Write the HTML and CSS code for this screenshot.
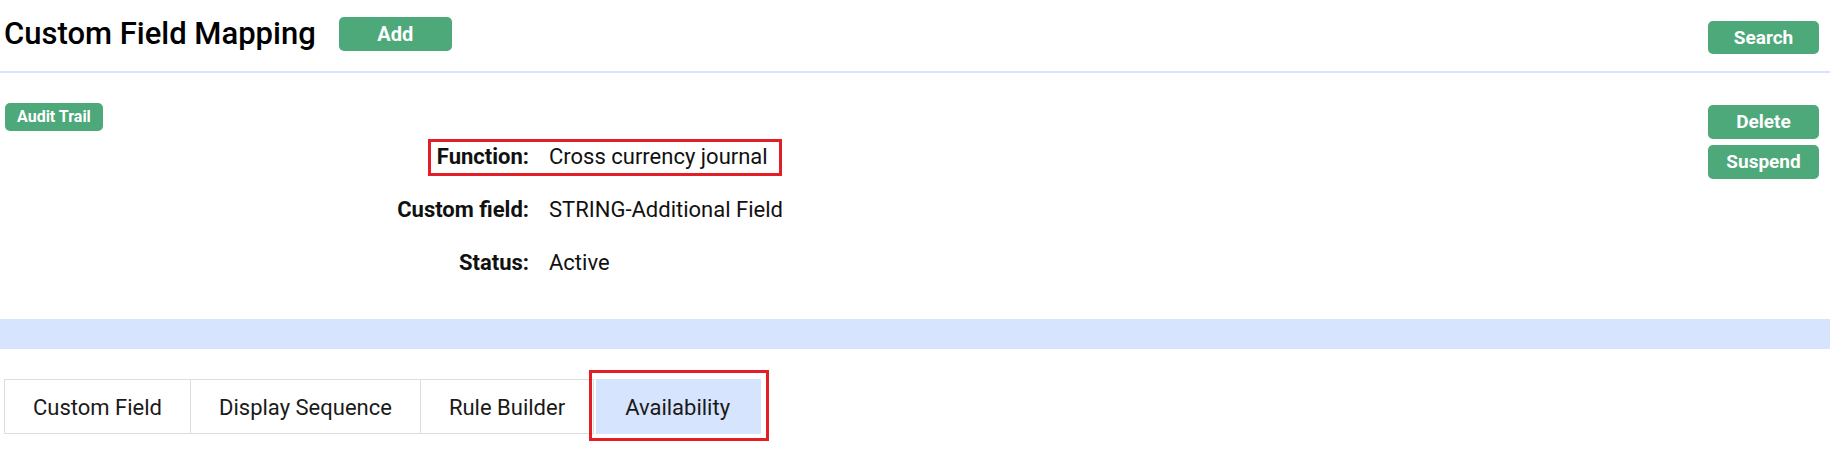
FILE: index.html
```html
<!DOCTYPE html>
<html lang="en">
<head>
<meta charset="utf-8">
<title>Custom Field Mapping</title>
<link rel="stylesheet" href="styles.css">
</head>
<body>
<header class="page-header">
  <div class="header-left">
    <h1 class="page-title">Custom Field Mapping</h1>
    <button class="btn btn-add">Add</button>
  </div>
  <button class="btn btn-search">Search</button>
</header>

<section class="detail">
  <div class="audit-col">
    <button class="btn btn-small">Audit Trail</button>
  </div>
  <dl class="fields">
    <dt>Function:</dt><dd>Cross currency journal</dd>
    <dt>Custom field:</dt><dd>STRING-Additional Field</dd>
    <dt>Status:</dt><dd>Active</dd>
  </dl>
  <div class="actions">
    <button class="btn btn-action">Delete</button>
    <button class="btn btn-action">Suspend</button>
  </div>
  <div class="highlight-box"></div>
</section>

<div class="band"></div>

<nav class="tabs">
  <ul class="tab-list">
    <li class="tab">Custom Field</li>
    <li class="tab">Display Sequence</li>
    <li class="tab">Rule Builder</li>
    <li class="tab tab-active">Availability</li>
  </ul>
</nav>
</body>
</html>
```

FILE: styles.css
```css
* { box-sizing: border-box; }

html, body {
  margin: 0;
  padding: 0;
  background: #ffffff;
}

body {
  font-family: Roboto, "Liberation Sans", sans-serif;
  color: #111111;
  width: 1830px;
  height: 449px;
  overflow: hidden;
}

.btn {
  font-family: Roboto, "Liberation Sans", sans-serif;
  background: #4da87a;
  color: #ffffff;
  border: none;
  border-radius: 5px;
  font-weight: 700;
  padding: 0;
  cursor: pointer;
}

/* Header */
.page-header {
  height: 73px;
  border-bottom: 2px solid #d7e4fc;
  display: flex;
  justify-content: space-between;
  align-items: flex-start;
}

.header-left {
  display: flex;
  align-items: flex-start;
  padding-left: 4px;
}

.page-title {
  margin: 16px 0 0 0;
  font-size: 31px;
  font-weight: 500;
  line-height: 36px;
  color: #000;
}

.btn-add {
  margin: 17px 0 0 23px;
  width: 113px;
  height: 34px;
  font-size: 20px;
  line-height: 34px;
}

.btn-search {
  margin: 21px 11px 0 0;
  width: 111px;
  height: 33px;
  font-size: 19px;
  line-height: 33px;
}

/* Detail */
.detail {
  position: relative;
  height: 246px;
  display: flex;
  align-items: flex-start;
  padding: 30px 11px 0 5px;
}

.audit-col {
  width: 384px;
  flex: none;
}

.btn-small {
  height: 28px;
  padding: 0 12px;
  font-size: 16px;
  line-height: 28px;
}

.fields {
  margin: 27px 0 0 0;
  display: grid;
  grid-template-columns: 140px auto;
  grid-auto-rows: 53px;
  column-gap: 20px;
  font-size: 22px;
  line-height: 53px;
}

.fields dt {
  font-weight: 700;
  text-align: right;
  color: #111;
}

.fields dd {
  margin: 0;
  color: #111;
}

.actions {
  margin-left: auto;
  margin-top: 2px;
  display: flex;
  flex-direction: column;
  gap: 6px;
}

.btn-action {
  width: 111px;
  height: 34px;
  font-size: 19px;
  line-height: 34px;
}

.highlight-box {
  position: absolute;
  left: 428px;
  top: 66px;
  width: 354px;
  height: 37px;
  border: 3px solid #e41e26;
  pointer-events: none;
}

/* Band */
.band {
  height: 30px;
  background: #d7e4fd;
}

/* Tabs */
.tabs {
  padding: 30px 0 0 4px;
}

.tab-list {
  list-style: none;
  margin: 0;
  padding: 0;
  display: flex;
}

.tab {
  height: 55px;
  padding: 15px 28px 0 28px;
  font-size: 22px;
  line-height: 26px;
  color: #1a1a1a;
  border: 1px solid #dddddd;
  border-left: none;
}

.tab:first-child {
  border-left: 1px solid #dddddd;
}

.tab-active {
  position: relative;
  margin-left: 2px;
  padding: 15px 30px 0 29px;
  background: #d7e4fd;
  border-color: #d7e4fd;
}

.tab-active::after {
  content: "";
  position: absolute;
  top: -10px;
  left: -7px;
  right: -9px;
  bottom: -8px;
  border: 3px solid #e41e26;
}
```
